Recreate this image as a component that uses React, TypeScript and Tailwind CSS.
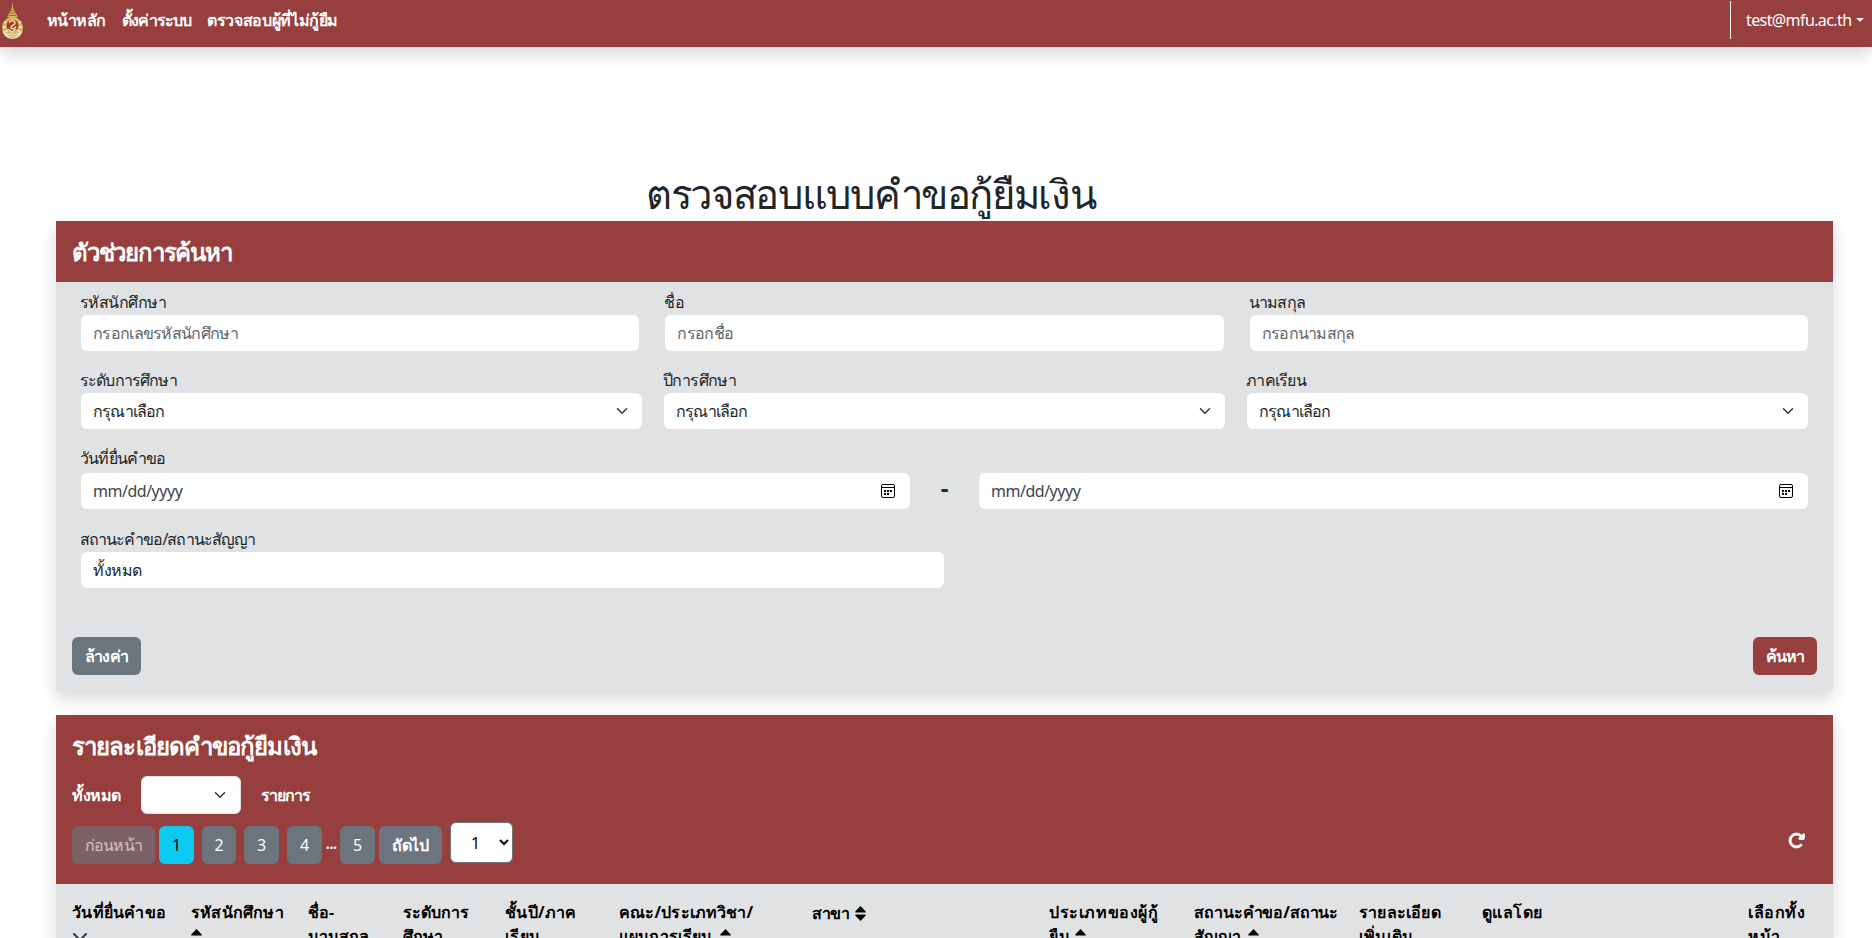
import type { ReactNode } from "react";
import { FaRotateRight } from "react-icons/fa6";

const Chevron = ({ className = "" }: { className?: string }) => (
  <svg viewBox="0 0 16 16" className={`shrink-0 ${className}`} fill="none" stroke="#343a40" strokeWidth="2" strokeLinecap="round" strokeLinejoin="round">
    <path d="m2 5 6 6 6-6" />
  </svg>
);

const Calendar = () => (
  <svg width="14" height="14" viewBox="0 0 14 14" fill="none" stroke="#000" className="shrink-0">
    <rect x="0.5" y="0.5" width="13" height="13" rx="1.5" />
    <path d="M1 3.500h12" />
    <path d="M3 7h8M3 10h5" strokeWidth="2" strokeDasharray="2 1" />
  </svg>
);

const Logo = () => (
  <svg width="23" height="38" viewBox="0 0 23 38" className="shrink-0">
    <path d="M11.500 0 12.300 6 14 10 17 15H6L9 10 10.700 6Z" fill="#d6ad55" />
    <path d="M10 8.500h3M9 11h5M8 13.500h7" stroke="#8d5a2b" strokeWidth="0.8" />
    <path d="M11.500 14C17 15 22 20 22 26a10.500 9 0 0 1-21 0C1 20 6 15 11.500 14Z" fill="#d9b568" />
    <path d="M3 19.500 5 21M20 19.500 18 21M2 25h3M21 25h-3M4 30l3-2M19 30l-3-2" stroke="#fbf1cf" strokeWidth="1.500" />
    <circle cx="11.500" cy="23.500" r="6" fill="#9c3f2c" />
    <path d="M8 20.500c2-2.500 6-2 6 .5s-4 2-4 4.500 4 1 5-1M11.500 17v2M7 27l4 3 4-3" fill="none" stroke="#f3dfa4" strokeWidth="1.500" />
    <path d="M1.500 28c3 3 6 4 10 4s7-1 10-4c0 5-5 9-10 9s-10-4-10-9Z" fill="#ecdcb4" />
    <path d="M7 33.500h9M9 35.500h5" stroke="#c9a374" strokeWidth="0.8" />
  </svg>
);

const Field = ({ label, className, labelClass = "tracking-[-0.75px]", children }: { label: string; className?: string; labelClass?: string; children: ReactNode }) => (
  <div className={className}>
    <div className={`-mt-px h-[25px] whitespace-nowrap leading-6 ${labelClass}`}>
      <span>{label}</span>
    </div>
    {children}
  </div>
);

const box = "flex h-9 items-center rounded-md bg-white pl-3";

const Placeholder = ({ children }: { children: ReactNode }) => (
  <div className={`${box} ml-px tracking-[-0.7px] text-[#5f656b]`}>{children}</div>
);

const Select = ({ children }: { children: ReactNode }) => (
  <div className={`${box} ml-px justify-between pr-3`}>
    <span className="tracking-[-0.8px]">{children}</span>
    <Chevron className="h-3 w-4" />
  </div>
);

const DateBox = () => (
  <div className={`${box} flex-1 justify-between pr-[15px]`}>
    <span className="tracking-[-0.48px] text-[#40454a]">mm/dd/yyyy</span>
    <Calendar />
  </div>
);

const btn = "flex h-[38px] shrink-0 items-center justify-center rounded-md bg-[#6c757d] text-white";

const Sort = ({ className = "" }: { className?: string }) => (
  <svg width="11" height="15" viewBox="0 0 11 15" fill="#000" className={`inline ${className}`}>
    <path d="M5.500 0 10.700 5.500q.4 1-.6 1H.9q-1 0-.6-1ZM5.500 15 10.700 9.500q.4-1-.6-1H.9q-1 0-.6 1Z" />
  </svg>
);

const SortUp = ({ className = "" }: { className?: string }) => (
  <svg width="11" height="15" viewBox="0 0 11 15" fill="#000" className={`relative -top-px inline ${className}`}>
    <path d="M5.500 0 10.700 5.500q.4 1-.6 1H.9q-1 0-.6-1Z" />
  </svg>
);

export default function App() {
  return (
    <div className="h-[938px] overflow-hidden bg-white font-['Noto_Sans',sans-serif] text-[16px] leading-6 text-[#212529]">
      <nav className="flex h-[47px] items-start bg-[#963f3e] text-white shadow-[0_8px_16px_rgba(0,0,0,0.15)]">
        <div className="pl-[1px] pt-[2px]"><Logo /></div>
        <div className="flex whitespace-nowrap pl-[23px] pt-2 font-semibold">
          <span className="w-[75px] tracking-[-0.55px]">หน้าหลัก</span>
          <span className="w-[85px] tracking-[-0.8px]">ตั้งค่าระบบ</span>
          <span className="tracking-[-0.35px]">ตรวจสอบผู้ที่ไม่กู้ยืม</span>
        </div>
        <div className="ml-auto mt-px flex h-[38px] items-center border-l border-white pl-[15px] pr-2">
          <span className="w-[106px] whitespace-nowrap tracking-[-0.6px]">test@mfu.ac.th</span>
          <span className="ml-1 border-x-4 border-t-4 border-x-transparent border-t-white" />
        </div>
      </nav>
      <h1 className="flex h-[174px] items-end pb-[3px] pl-[646px]">
        <span className="whitespace-nowrap text-[40px] leading-[48px] tracking-[-1.35px]">ตรวจสอบแบบคำขอกู้ยืมเงิน</span>
      </h1>
      <main className="ml-14 w-[1777px]">
        <section className="h-[470px] bg-[#e1e2e4] shadow-[0_8px_16px_rgba(0,0,0,0.15)]">
          <header className="flex h-[61px] items-center bg-[#963f3e] pl-4 text-[24px] font-semibold tracking-[-1.2px] text-white">
            <span>ตัวช่วยการค้นหา</span>
          </header>
          <div className="pl-6 pr-[25px] pt-[9px]">
            <div className="flex gap-[25px]">
              <Field label="รหัสนักศึกษา" labelClass="tracking-[-0.55px]" className="flex-1"><Placeholder>กรอกเลขรหัสนักศึกษา</Placeholder></Field>
              <Field label="ชื่อ" labelClass="tracking-[-0.4px]" className="flex-1"><Placeholder>กรอกชื่อ</Placeholder></Field>
              <Field label="นามสกุล" className="flex-1"><Placeholder>กรอกนามสกุล</Placeholder></Field>
            </div>
            <div className="mt-[18px] flex gap-[21px]">
              <Field label="ระดับการศึกษา" labelClass="tracking-[-0.85px]" className="flex-1"><Select>กรุณาเลือก</Select></Field>
              <Field label="ปีการศึกษา" labelClass="tracking-[-0.6px]" className="flex-1"><Select>กรุณาเลือก</Select></Field>
              <Field label="ภาคเรียน" className="flex-1"><Select>กรุณาเลือก</Select></Field>
            </div>
            <Field label="วันที่ยื่นคำขอ" labelClass="tracking-[-0.8px]" className="mt-[18px]">
              <div className="ml-px mt-[2px] flex">
                <DateBox />
                <div className="w-[69px] text-center text-[24px] font-bold leading-[30px]">-</div>
                <DateBox />
              </div>
            </Field>
            <Field label="สถานะคำขอ/สถานะสัญญา" labelClass="tracking-[-0.95px]" className="mt-[19px] w-[864px]"><div className={`${box} ml-px tracking-[-0.4px]`}>ทั้งหมด</div></Field>
          </div>
          <div className="mt-[49px] flex justify-between px-4 font-semibold">
            <button className={`${btn} w-[69px] tracking-[-0.75px]`}>ล้างค่า</button>
            <button className="flex h-[38px] w-16 items-center justify-center rounded-md bg-[#963f3e] tracking-[-0.75px] text-white">ค้นหา</button>
          </div>
        </section>
        <section className="mt-6 h-[223px] bg-[#e1e2e4] shadow-[0_8px_16px_rgba(0,0,0,0.15)]">
          <header className="h-[169px] bg-[#963f3e] pl-4 pt-4 font-semibold text-white">
            <div className="text-[24px] leading-[29px] tracking-[-0.9px]"><span>รายละเอียดคำขอกู้ยืมเงิน</span></div>
            <div className="mt-4 flex h-[38px] items-center">
              <span className="w-[69px] tracking-[-0.4px]">ทั้งหมด</span>
              <div className="flex h-[38px] w-[100px] items-center justify-end rounded-md border border-[#dee2e6] bg-white pr-3"><Chevron className="h-3 w-4" /></div>
              <span className="ml-5 tracking-[-1.1px]">รายการ</span>
            </div>
            <div className="mt-2 flex items-start">
              <button className={`${btn} mt-1 w-[83px] font-normal tracking-[-0.7px] opacity-65`}>ก่อนหน้า</button>
              <button className="ml-1 mt-1 h-[38px] w-[35px] rounded-md bg-[#0dcaf0] font-normal text-black">1</button>
              <button className={`${btn} ml-2 mt-1 w-[34px] font-normal`}>2</button>
              <button className={`${btn} ml-2 mt-1 w-[35px] font-normal`}>3</button>
              <button className={`${btn} ml-2 mt-1 w-[35px] font-normal`}>4</button>
              <span className="mt-[9px] w-[18px] text-center tracking-[-0.8px]">...</span>
              <button className={`${btn} mt-1 w-[35px] font-normal`}>5</button>
              <button className={`${btn} ml-1 mt-1 w-[63px] tracking-[-0.3px]`}>ถัดไป</button>
              <div className="ml-2 flex h-[41px] w-[63px] items-center justify-between rounded-md border border-[#767676] bg-white pl-5 pr-[3px] font-normal text-black">
                <span>1</span>
                <svg width="10" height="7" viewBox="0 0 10 7" fill="none" stroke="#000" strokeWidth="2"><path d="m1 1 4 4 4-4" /></svg>
              </div>
              <FaRotateRight className="ml-auto mr-7 mt-[10px] h-[17px] w-[17px]" stroke="#fff" strokeWidth="24" />
            </div>
          </header>
          <div className="flex h-[54px] overflow-hidden whitespace-nowrap pl-4 pt-4 font-bold leading-6 text-black">
            <div className="w-[119px] tracking-[0.25px]">วันที่ยื่นคำขอ<br /><Chevron className="mt-[5px] h-4 w-4" /></div>
            <div className="w-[117px] tracking-[0.2px]">รหัสนักศึกษา<br /><SortUp /></div>
            <div className="w-[95px]">ชื่อ-<br />นามสกุล</div>
            <div className="w-[102px]">ระดับการ<br />ศึกษา</div>
            <div className="w-[114px] tracking-[0.3px]">ชั้นปี/ภาค<br />เรียน</div>
            <div className="w-[193px] tracking-[0.15px]">คณะ/ประเภทวิชา/<br />แผนการเรียน <SortUp className="ml-[3px]" /></div>
            <div className="w-[237px] pt-px tracking-[-0.3px]">สาขา <Sort className="relative -top-px ml-px" /></div>
            <div className="w-[145px] tracking-[0.6px]">ประเภทของผู้กู้<br />ยืม <SortUp /></div>
            <div className="w-[165px] tracking-[-0.1px]">สถานะคำขอ/สถานะ<br />สัญญา <SortUp className="ml-[3px]" /></div>
            <div className="w-[123px] tracking-[0.2px]">รายละเอียด<br />เพิ่มเติม</div>
            <div className="w-[266px] tracking-[0.4px]">ดูแลโดย</div>
            <div className="tracking-[0.6px]">เลือกทั้ง<br />หน้า</div>
          </div>
        </section>
      </main>
    </div>
  );
}
